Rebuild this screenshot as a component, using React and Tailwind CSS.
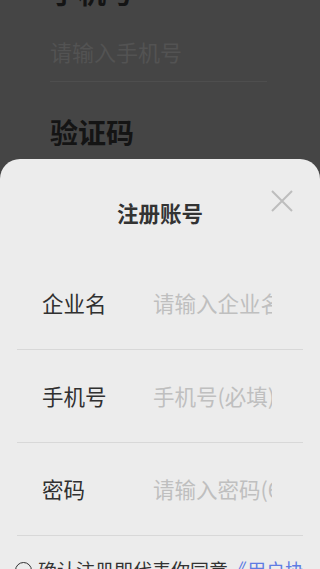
import { useState } from 'react'

const fields = [
  { label: '企业名', placeholder: '请输入企业名称' },
  { label: '手机号', placeholder: '手机号(必填)' },
  { label: '密码', placeholder: '请输入密码(6-16位)' },
]

// 注册弹窗，底部弹出
const RegisterSheet = () => {
  const [agree, setAgree] = useState(false)

  return (
    <div className="absolute inset-x-0 top-[159px] bottom-0 rounded-t-[20px] bg-[#ececec] overflow-hidden">
      <div className="h-[98px] pt-[40px]">
        <h2 className="text-center text-[21.5px] leading-[28px] font-bold text-[#333]">注册账号</h2>
      </div>
      <button className="absolute top-[31px] right-[27px] w-[22px] h-[22px]">
        <svg viewBox="0 0 22 22" className="w-full h-full" fill="none" stroke="#bdbdbd" strokeWidth="2">
          <path d="M1 1L21 21M21 1L1 21" />
        </svg>
      </button>

      <div className="px-[17px]">
        {fields.map((f) => (
          <div key={f.label} className="h-[93px] flex items-center border-b border-[#d8d8d8] pl-[25px]">
            <span className="w-[111px] text-[21.5px] text-[#303030]">{f.label}</span>
            <input
              className="w-[119px] bg-transparent outline-none text-[21.5px] text-[#333] placeholder:text-[#bfbfbf]"
              placeholder={f.placeholder}
            />
          </div>
        ))}
      </div>

      <div className="flex items-start mt-[22px] pl-[15px] pr-[14px] gap-[6px]">
        <button
          onClick={() => setAgree(!agree)}
          className="mt-[3.5px] w-[17px] h-[17px] shrink-0 rounded-full border-[1.5px] border-[#333]"
        />
        <p className="text-[19px] leading-[24px] text-[#333]">
          确认注册即代表你同意<span className="text-[#5f7ce3]">《用户协议》</span>和<span className="text-[#5f7ce3]">《隐私政策》</span>
        </p>
      </div>
    </div>
  )
}

export default function App() {
  return (
    <div
      className="relative h-[569px] w-full overflow-hidden bg-[#454545]"
      style={{ fontFamily: '"Noto Sans CJK SC", "Noto Sans", sans-serif' }}
    >
      {/* 背后的登录页（已被遮罩压暗） */}
      <div className="pl-[50px] pr-[53px]">
        <h1 className="-mt-[28px] text-[28px] leading-[40px] font-bold text-[#141414]">手机号</h1>
        <div className="mt-[24px] text-[22px] leading-[30px] text-[#535353]">请输入手机号</div>
        <div className="mt-[15px] h-px bg-[#4e4e4e]" />
        <h1 className="mt-[30px] text-[28px] leading-[40px] font-bold text-[#141414]">验证码</h1>
      </div>

      <RegisterSheet />
    </div>
  )
}
